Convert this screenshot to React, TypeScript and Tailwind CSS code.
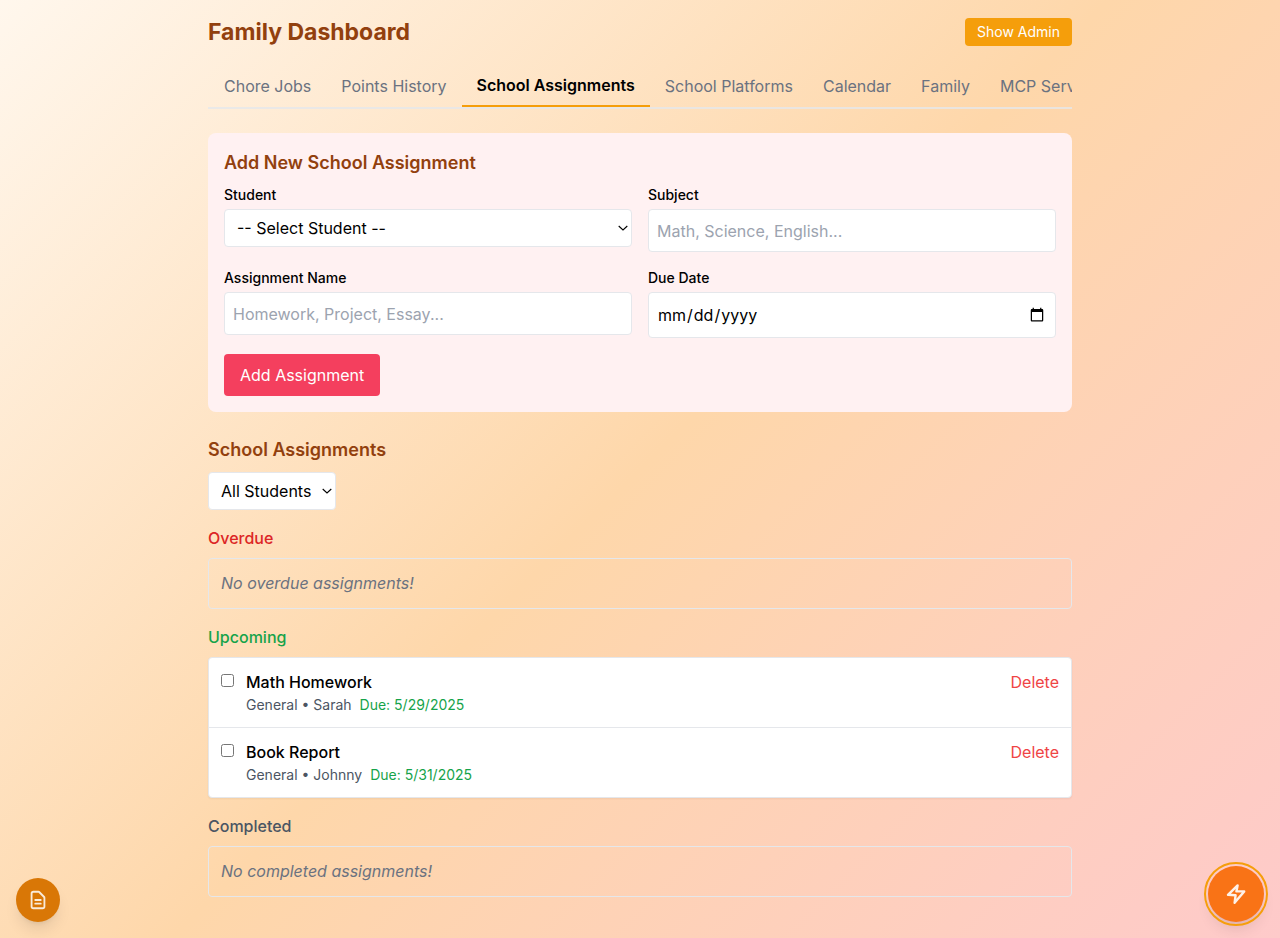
import React from "react";

const tabs = [
  "Chore Jobs",
  "Points History",
  "School Assignments",
  "School Platforms",
  "Calendar",
  "Family",
  "MCP Server",
];

const upcoming = [
  { id: "math", name: "Math Homework", meta: "General • Sarah", due: "5/29/2025" },
  { id: "book", name: "Book Report", meta: "General • Johnny", due: "5/31/2025" },
];

const field = "w-full rounded border border-[#e5e7eb] bg-white text-base text-black";
const labelStyle = "mb-1 block text-sm font-medium";

function Chevron() {
  return (
    <svg
      className="pointer-events-none absolute right-1 top-1/2 h-2 w-2.5 -translate-y-1/2"
      viewBox="0 0 10 8"
      fill="none"
      stroke="currentColor"
      strokeWidth="1.1"
      aria-hidden="true"
    >
      <path d="M0.7 2l4.3 4 4.3-4" />
    </svg>
  );
}

function EmptyBox({ children }: { children: React.ReactNode }) {
  return (
    <p className="rounded border border-[#e5e7eb] p-3 leading-[25px] text-[#6b7280] italic">
      {children}
    </p>
  );
}

export default function App() {
  return (
    <div className="min-h-screen bg-[linear-gradient(135deg,#fff7ed_0%,#fed7aa_50%,#fecaca_100%)] font-[Inter,sans-serif] text-base text-black">
      <main className="mx-auto max-w-4xl px-4 pt-4 pb-10">
        <header className="flex items-center justify-between">
          <h1 className="text-[23px] leading-8 font-bold text-[#92400e]">Family Dashboard</h1>
          <button className="rounded bg-[#f59e0b] px-3 py-1 text-sm text-white">Show Admin</button>
        </header>

        <nav className="mt-4 flex overflow-hidden border-b-2 border-[#e5e7eb]/80 pl-px">
          {tabs.map((tab) =>
            tab === "School Assignments" ? (
              <button
                key={tab}
                className="shrink-0 border-b-2 border-[#f59e0b] px-[15px] pt-[9px] pb-[7px] leading-[25px] font-semibold whitespace-nowrap"
              >
                {tab}
              </button>
            ) : (
              <button
                key={tab}
                className="shrink-0 px-[15px] pt-[9px] pb-[7px] leading-[25px] whitespace-nowrap text-[#6b7280]"
              >
                {tab}
              </button>
            )
          )}
        </nav>

        <form className="mt-6 rounded-lg bg-[#fff1f2] p-4" onSubmit={(e) => e.preventDefault()}>
          <h2 className="mb-2 text-lg font-semibold text-[#92400e]">Add New School Assignment</h2>
          <div className="grid grid-cols-2 gap-4">
            <div>
              <label htmlFor="student" className={labelStyle}>Student</label>
              <div className="relative">
                <select id="student" className={`${field} block h-[38px] appearance-none px-3`}>
                  <option>-- Select Student --</option>
                  <option>Sarah</option>
                  <option>Johnny</option>
                </select>
                <Chevron />
              </div>
            </div>
            <div>
              <label htmlFor="subject" className={labelStyle}>Subject</label>
              <input
                id="subject"
                type="text"
                placeholder="Math, Science, English..."
                className={`${field} block h-[43px] px-2 placeholder:text-[#9ca3af]`}
              />
            </div>
            <div>
              <label htmlFor="name" className={labelStyle}>Assignment Name</label>
              <input
                id="name"
                type="text"
                placeholder="Homework, Project, Essay..."
                className={`${field} block h-[43px] px-2 placeholder:text-[#9ca3af]`}
              />
            </div>
            <div>
              <label htmlFor="due" className={labelStyle}>Due Date</label>
              <input id="due" type="date" className={`${field} block h-[46px] px-2`} />
            </div>
          </div>
          <button className="mt-4 block rounded bg-[#f43f5e] px-4 py-2 leading-[26px] text-white">
            Add Assignment
          </button>
        </form>

        <h2 className="mt-6 mb-2 text-lg font-semibold text-[#92400e]">School Assignments</h2>
        <div className="relative w-32">
          <select
            aria-label="Filter by student"
            className={`${field} block h-[38px] appearance-none px-3`}
          >
            <option>All Students</option>
            <option>Sarah</option>
            <option>Johnny</option>
          </select>
          <Chevron />
        </div>

        <section className="mt-4">
          <h3 className="mb-2 font-medium text-[#dc2626]">Overdue</h3>
          <EmptyBox>No overdue assignments!</EmptyBox>
        </section>

        <section className="mt-4">
          <h3 className="mb-2 font-medium text-[#16a34a]">Upcoming</h3>
          <ul className="divide-y divide-[#e5e7eb] rounded border border-[#e5e7eb] bg-white shadow-xs">
            {upcoming.map((item) => (
              <li key={item.id} className="flex items-start gap-3 p-3">
                <input id={item.id} type="checkbox" className="mt-1 h-[13px] w-[13px]" />
                <div className="grow">
                  <label htmlFor={item.id} className="block leading-[25px] font-medium">
                    {item.name}
                  </label>
                  <p className="flex gap-2 text-sm text-[#4b5563]">
                    <span>{item.meta}</span>
                    <span className="text-[#16a34a]">Due: {item.due}</span>
                  </p>
                </div>
                <button className="leading-[25px] text-[#ef4444]">Delete</button>
              </li>
            ))}
          </ul>
        </section>

        <section className="mt-4">
          <h3 className="mb-2 font-medium text-[#4b5563]">Completed</h3>
          <EmptyBox>No completed assignments!</EmptyBox>
        </section>
      </main>

      <button
        aria-label="Notes"
        className="fixed bottom-4 left-4 flex h-11 w-11 items-center justify-center rounded-full bg-[#d97706] text-white/85 shadow-lg"
      >
        <svg className="h-[22px] w-[22px]" viewBox="0 0 24 24" fill="none" stroke="currentColor" strokeWidth="2" strokeLinecap="round" strokeLinejoin="round" aria-hidden="true">
          <path d="M9 12h6m-6 4h6m2 5H7a2 2 0 01-2-2V5a2 2 0 012-2h5.586a1 1 0 01.707.293l5.414 5.414a1 1 0 01.293.707V19a2 2 0 01-2 2z" />
        </svg>
      </button>
      <button
        aria-label="Quick actions"
        className="fixed right-4 bottom-4 flex h-14 w-14 items-center justify-center rounded-full bg-[#f97316] text-white/90 shadow-lg outline-2 outline-offset-2 outline-[#f59e0b]"
      >
        <svg className="h-6 w-6" viewBox="0 0 24 24" fill="none" stroke="currentColor" strokeWidth="2.4" strokeLinecap="round" strokeLinejoin="round" aria-hidden="true">
          <path d="M4 12.8L13.6 3.4L12.4 9.4H20.2L10.6 20.8L11.6 13.2Z" />
        </svg>
      </button>
    </div>
  );
}
